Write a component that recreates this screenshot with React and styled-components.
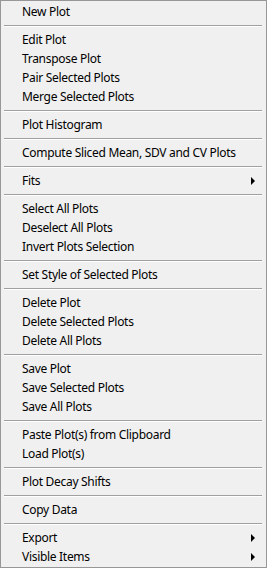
import React from "react";
import styled, { createGlobalStyle } from "styled-components";

const GlobalStyle = createGlobalStyle`
  html, body {
    margin: 0;
    padding: 0;
    background: #f0f0f0;
  }
`;

const MENU = [
  ["New Plot"],
  "-",
  ["Edit Plot"],
  ["Transpose Plot"],
  ["Pair Selected Plots"],
  ["Merge Selected Plots"],
  "-",
  ["Plot Histogram"],
  "-",
  ["Compute Sliced Mean, SDV and CV Plots"],
  "-",
  ["Fits", true],
  "-",
  ["Select All Plots"],
  ["Deselect All Plots"],
  ["Invert Plots Selection"],
  "-",
  ["Set Style of Selected Plots"],
  "-",
  ["Delete Plot"],
  ["Delete Selected Plots"],
  ["Delete All Plots"],
  "-",
  ["Save Plot"],
  ["Save Selected Plots"],
  ["Save All Plots"],
  "-",
  ["Paste Plot(s) from Clipboard"],
  ["Load Plot(s)"],
  "-",
  ["Plot Decay Shifts"],
  "-",
  ["Copy Data"],
  "-",
  ["Export", true],
  ["Visible Items", true],
];

const Menu = styled.div`
  box-sizing: border-box;
  width: 267px;
  height: 568px;
  background: #f0f0f0;
  border: 1px solid #979797;
  padding: 1px 1px;
  display: flex;
  flex-direction: column;
  font-family: "Noto Sans", "Liberation Sans", sans-serif;
  font-size: 12px;
  letter-spacing: -0.3px;
  color: #000;
`;

const Item = styled.div`
  height: 19px;
  display: flex;
  align-items: center;
  padding-left: 20px;
  padding-right: 10px;
  white-space: nowrap;
`;

const Label = styled.span`
  flex: 1;
  line-height: 19px;
`;

const Arrow = styled.span`
  width: 0;
  height: 0;
  border-top: 4px solid transparent;
  border-bottom: 4px solid transparent;
  border-left: 4px solid #000;
`;

const Separator = styled.div`
  height: 9px;
  display: flex;
  flex-direction: column;
  justify-content: center;
  padding: 0 3px 0 2px;

  &::before {
    content: "";
    display: block;
    height: 1px;
    background: #a0a0a0;
  }
  &::after {
    content: "";
    display: block;
    height: 1px;
    background: #ffffff;
  }
`;

export default function App() {
  return (
    <>
      <GlobalStyle />
      <Menu>
        {MENU.map((entry, i) =>
          entry === "-" ? (
            <Separator key={i} />
          ) : (
            <Item key={i}>
              <Label>{entry[0]}</Label>
              {entry[1] && <Arrow />}
            </Item>
          )
        )}
      </Menu>
    </>
  );
}
